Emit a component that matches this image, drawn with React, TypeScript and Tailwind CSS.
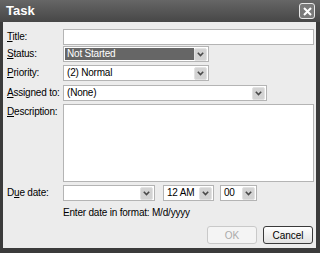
import { ReactNode } from "react";

const FONT = { fontFamily: '"Liberation Sans", Arial, sans-serif' };

function Key({ children }: { children: ReactNode }) {
  return <span className="underline underline-offset-1">{children}</span>;
}

function Arrow() {
  return (
    <div className="flex h-[13px] w-[13px] items-center justify-center rounded-[2px] border border-[#e2e2e2] bg-[#d3d3d3]">
      <svg width="7" height="5" viewBox="0 0 7 5">
        <path d="M0.8 0.8 L3.5 3.6 L6.2 0.8" fill="none" stroke="#4a4a4a" strokeWidth="1.6" />
      </svg>
    </div>
  );
}

function Select({
  value,
  width,
  selected,
}: {
  value: string;
  width: string;
  selected?: boolean;
}) {
  return (
    <div className={`flex h-[16px] items-center border border-[#b4b4b4] bg-white p-px ${width}`}>
      <div
        className={`flex h-full flex-1 items-center whitespace-nowrap pl-[2px] text-[10px] leading-none tracking-[-0.2px] ${
          selected ? "bg-[#666] text-white" : "text-black"
        }`}
      >
        {value}
      </div>
      <Arrow />
    </div>
  );
}

function Label({ children }: { children: ReactNode }) {
  return (
    <div className="whitespace-nowrap text-[10px] leading-none tracking-[-0.2px] text-black">
      {children}
    </div>
  );
}

export default function App() {
  return (
    <div style={FONT} className="flex h-[253px] w-[320px] flex-col bg-[#3b3b3b]">
      <div className="flex h-[22px] items-center justify-between bg-gradient-to-b from-[#666] to-[#474747] pl-[6px] pr-[5px]">
        <span className="text-[13px] font-bold text-white">Task</span>
        <div className="flex h-[16px] w-[16px] items-center justify-center rounded-[3px] border border-[#e8e8e8] bg-[#7a7a7a]">
          <svg width="9" height="9" viewBox="0 0 9 9">
            <path d="M1 1 L8 8 M8 1 L1 8" stroke="white" strokeWidth="2" />
          </svg>
        </div>
      </div>

      <div className="mb-[5px] ml-[3px] mr-[4px] flex flex-1 flex-col bg-[#ececec] pl-[4px] pr-[2px] pt-[7px]">
        <div className="grid grid-cols-[56px_1fr] items-center">
          <Label>
            <Key>T</Key>itle:
          </Label>
          <div className="h-[16px] border border-[#b4b4b4] bg-white" />
        </div>

        <div className="mt-[1px] grid grid-cols-[56px_1fr] items-center">
          <Label>
            <Key>S</Key>tatus:
          </Label>
          <Select value="Not Started" width="w-[146px]" selected />
        </div>

        <div className="mt-[3px] grid grid-cols-[56px_1fr] items-center">
          <Label>
            <Key>P</Key>riority:
          </Label>
          <Select value="(2) Normal" width="w-[146px]" />
        </div>

        <div className="mt-[4px] grid grid-cols-[56px_1fr] items-center">
          <Label>
            <Key>A</Key>ssigned to:
          </Label>
          <Select value="(None)" width="w-[204px]" />
        </div>

        <div className="mt-[3px] grid grid-cols-[56px_1fr] items-start">
          <div className="pt-[3px]">
            <Label>
              <Key>D</Key>escription:
            </Label>
          </div>
          <div className="h-[78px] border border-[#b4b4b4] bg-white" />
        </div>

        <div className="mt-[3px] grid grid-cols-[56px_1fr] items-center">
          <Label>
            D<Key>u</Key>e date:
          </Label>
          <div className="flex items-center">
            <Select value="" width="w-[92px]" />
            <div className="ml-[8px]">
              <Select value="12 AM" width="w-[51px]" />
            </div>
            <div className="ml-[6px]">
              <Select value="00" width="w-[37px]" />
            </div>
          </div>
        </div>

        <div className="mt-[7px] whitespace-nowrap pl-[56px] text-[10px] leading-none tracking-[-0.2px] text-black">
          Enter date in format: M/d/yyyy
        </div>

        <div className="mb-[4px] mt-auto flex justify-end gap-[6px] pr-[1px]">
          <div className="flex h-[18px] w-[50px] items-center justify-center rounded-[3px] border border-[#c9c9c9] bg-[#f4f4f4] text-[10px] text-[#ababab]">
            OK
          </div>
          <div className="flex h-[18px] w-[50px] items-center justify-center rounded-[3px] border border-[#3a3a3a] bg-gradient-to-b from-white to-[#e2e2e2] text-[10px] text-black">
            Cancel
          </div>
        </div>
      </div>
    </div>
  );
}
